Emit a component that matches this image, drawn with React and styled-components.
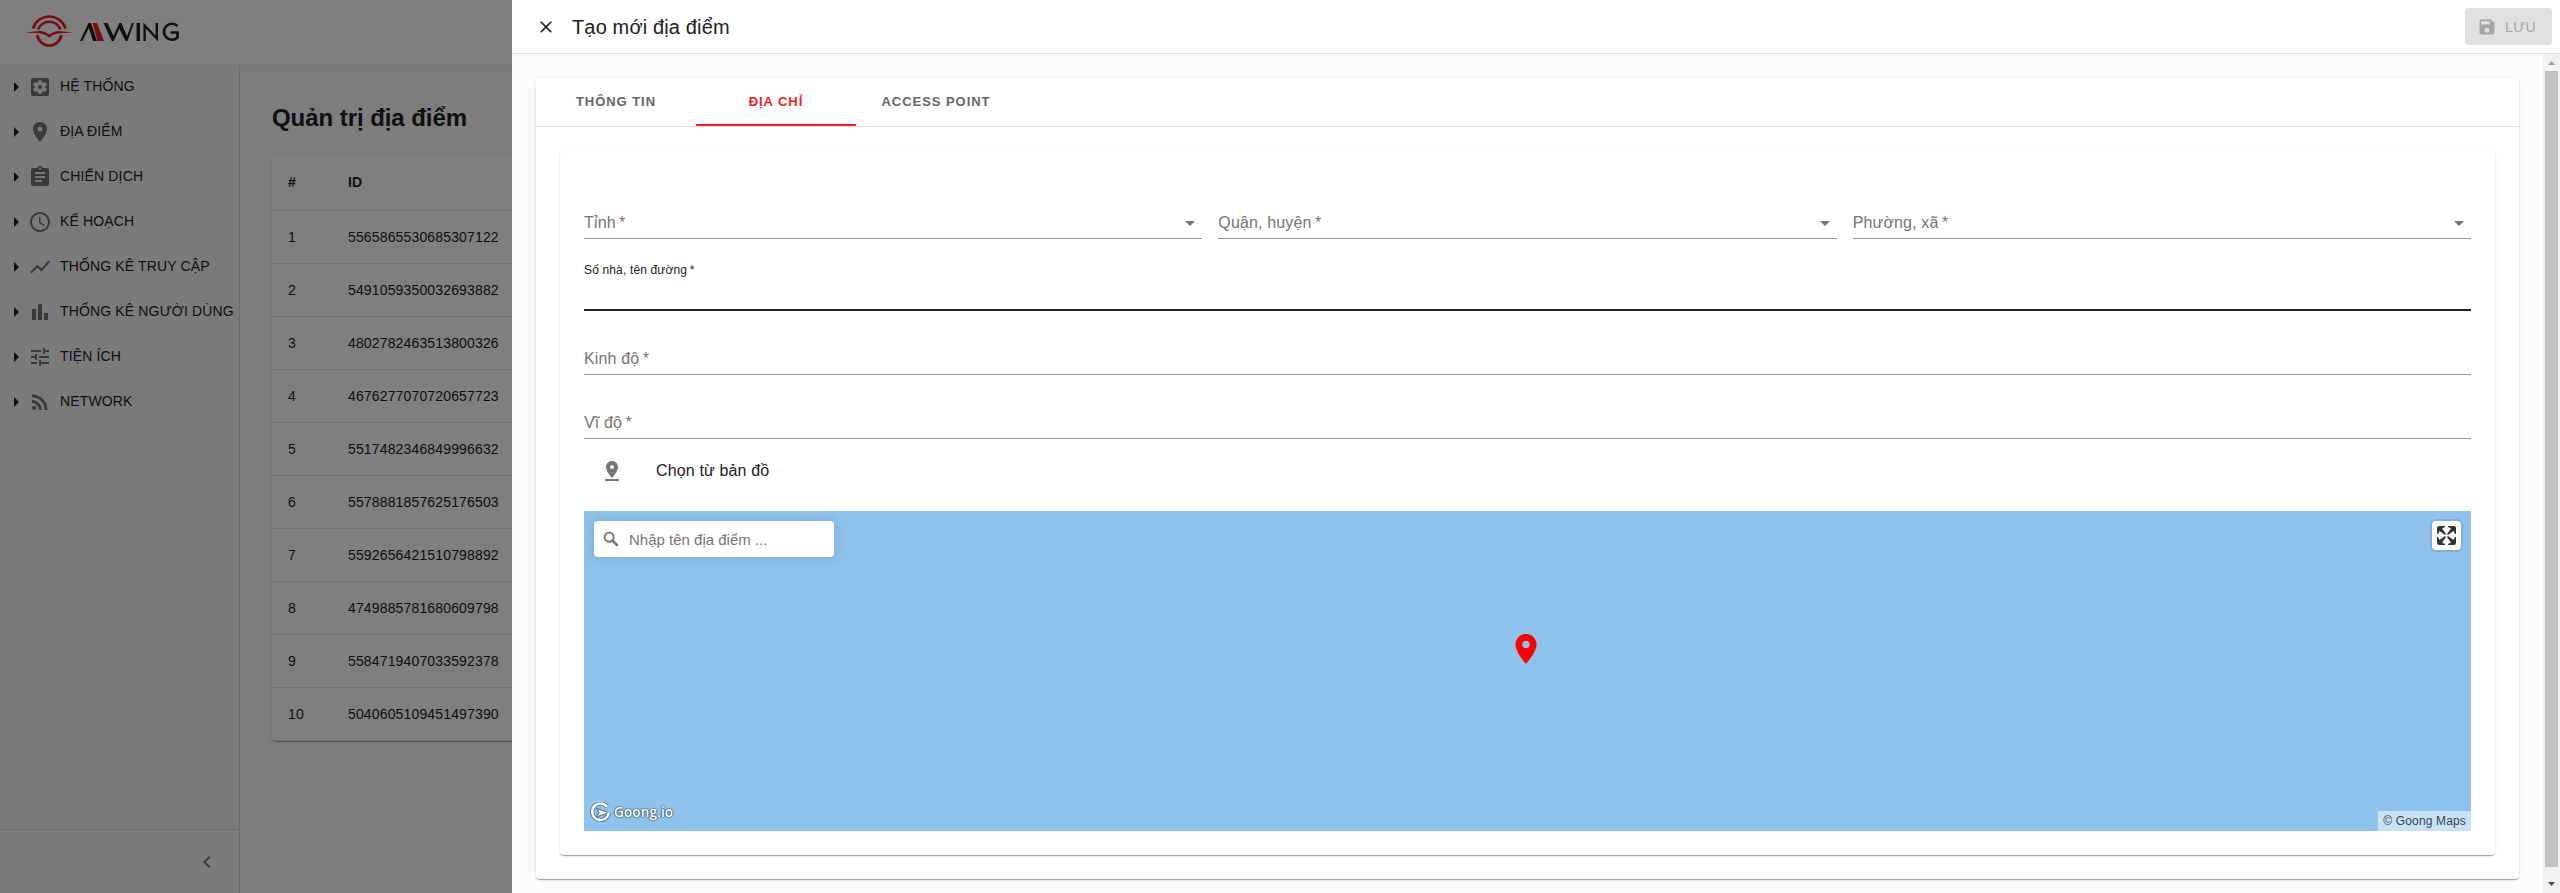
import React from "react";
import styled, { createGlobalStyle, css } from "styled-components";

const Global = createGlobalStyle`
  *, *::before, *::after { box-sizing: border-box; }
  html, body, #root { height: 100%; }
  body {
    margin: 0;
    overflow: hidden;
    font-family: "Liberation Sans", Arial, sans-serif;
    font-size: 14px;
    letter-spacing: 0.15px;
    color: #212121;
    background: #fafafa;
  }
`;

const Screen = styled.div`
  position: relative;
  width: 100%;
  height: 893px;
  overflow: hidden;
`;

const paper = css`
  background: #fff;
  border-radius: 4px;
  box-shadow: 0 2px 1px -1px rgba(0, 0, 0, 0.2), 0 1px 1px rgba(0, 0, 0, 0.14), 0 1px 3px rgba(0, 0, 0, 0.12);
`;

/* ---------- page behind the drawer ---------- */
const Page = styled.div`
  display: flex;
  flex-direction: column;
  height: 100%;
`;
const TopBar = styled.header`
  flex: none;
  height: 65px;
  padding: 15px 0 0 25px;
  background: #fff;
  border-bottom: 1px solid #f0f0f0;
`;
const PageBody = styled.div`
  flex: 1;
  display: flex;
  min-height: 0;
`;
const Sidebar = styled.aside`
  flex: none;
  width: 240px;
  display: flex;
  flex-direction: column;
  background: #f5f5f5;
  border-right: 1px solid #d6d6d6;
`;
const NavList = styled.nav`
  flex: 1;
`;
const NavItem = styled.div`
  display: flex;
  align-items: flex-start;
  height: 45px;
  padding: 10px 0 0 4px;
  white-space: nowrap;
  svg { display: block; }
`;
const NavIcon = styled.span`
  color: #757575;
`;
const NavLabel = styled.span`
  margin: 1px 0 0 8px;
  line-height: 20px;
`;
const SidebarFoot = styled.div`
  flex: none;
  height: 64px;
  display: flex;
  align-items: center;
  justify-content: flex-end;
  padding: 0 20px 0 0;
  border-top: 1px solid #dcdcdc;
  background: #f8f8f8;
  color: #757575;
`;
const Main = styled.main`
  flex: 1;
  padding: 37px 24px 0 32px;
`;
const PageTitle = styled.h1`
  margin: 0 0 20px;
  font-size: 24px;
  line-height: 32px;
  font-weight: 700;
  letter-spacing: -0.06px;
`;
const Table = styled.div`
  ${paper}
`;
const Row = styled.div`
  display: flex;
  align-items: center;
  height: ${(p) => (p.$head ? 57 : 53)}px;
  padding-left: 16px;
  border-bottom: 1px solid #e0e0e0;
  font-weight: ${(p) => (p.$head ? 700 : 400)};
`;
const IndexCell = styled.span`
  width: 60px;
`;

/* ---------- drawer ---------- */
const Backdrop = styled.div`
  position: absolute;
  inset: 0;
  background: rgba(0, 0, 0, 0.5);
`;
const Drawer = styled.section`
  position: absolute;
  top: 0;
  right: 0;
  width: 2048px;
  height: 100%;
  display: flex;
  flex-direction: column;
  background: #fafafa;
`;
const DrawerHead = styled.div`
  flex: none;
  display: flex;
  align-items: center;
  height: 54px;
  padding: 0 8px 0 24px;
  background: #fff;
  border-bottom: 1px solid #e0e0e0;
`;
const DrawerTitle = styled.h2`
  flex: 1;
  margin: 0 0 0 16px;
  font-size: 20px;
  line-height: 32px;
  font-weight: 400;
`;
const SaveButton = styled.button`
  display: flex;
  align-items: center;
  width: 87px;
  height: 37px;
  padding: 0 0 0 12px;
  border: 0;
  border-radius: 4px;
  background: #e0e0e0;
  color: #a6a6a6;
  font: inherit;
  letter-spacing: 0.4px;
  svg { margin-right: 8px; }
`;
const DrawerBody = styled.div`
  flex: 1;
  display: flex;
  min-height: 0;
`;
const Scroll = styled.div`
  flex: 1;
  padding: 24px;
`;
const TabCard = styled.div`
  ${paper}
  height: 801px;
`;
const Tabs = styled.div`
  display: flex;
  height: 49px;
  border-bottom: 1px solid #e0e0e0;
`;
const Tab = styled.div`
  width: 160px;
  height: 48px;
  padding-bottom: ${(p) => (p.$active ? 0 : 2)}px;
  display: flex;
  align-items: center;
  justify-content: center;
  font-size: 13px;
  font-weight: 700;
  letter-spacing: 0.95px;
  color: ${(p) => (p.$active ? "#ed1c24" : "#666")};
  border-bottom: ${(p) => (p.$active ? "2px solid #ed1c24" : "0")};
`;
const FormCard = styled.div`
  ${paper}
  margin: 24px;
  height: 704px;
  padding: 40px 24px 24px;
  display: flex;
  flex-direction: column;
`;
const SelectRow = styled.div`
  display: grid;
  grid-template-columns: repeat(3, 1fr);
  gap: 16px;
  margin-bottom: 24px;
`;
const FieldStack = styled.div`
  display: flex;
  flex-direction: column;
  gap: 16px;
`;
const Field = styled.div`
  flex: none;
  display: flex;
  align-items: flex-end;
  justify-content: space-between;
  height: 48px;
  padding-bottom: 5px;
  border-bottom: 1px solid #949494;
  font-size: 16px;
  line-height: 20px;
  color: #757575;
  svg { display: block; margin-bottom: -2px; }
  ${(p) =>
    p.$focused &&
    css`
      align-items: flex-start;
      padding: 0;
      border-bottom: 2px solid #212121;
      font-size: 12px;
      line-height: 14px;
      color: #212121;
    `}
`;
const PickRow = styled.div`
  flex: none;
  display: flex;
  align-items: center;
  gap: 32px;
  height: 48px;
  margin: 8px 0 16px;
  padding-left: 16px;
  font-size: 16px;
  svg { color: #757575; }
`;
const Map = styled.div`
  position: relative;
  flex: none;
  height: 320px;
  background: #8fc3eb;
`;
const SearchBox = styled.div`
  position: absolute;
  top: 10px;
  left: 10px;
  display: flex;
  align-items: center;
  gap: 8px;
  width: 240px;
  height: 36px;
  padding-left: 7px;
  border-radius: 4px;
  background: #fff;
  box-shadow: 0 0 10px 2px rgba(0, 0, 0, 0.1);
  font-size: 15px;
  letter-spacing: 0;
  color: #757575;
`;
const FullscreenButton = styled.div`
  position: absolute;
  top: 10px;
  right: 10px;
  width: 29px;
  height: 29px;
  border-radius: 4px;
  background: #fff;
  box-shadow: 0 0 0 2px rgba(0, 0, 0, 0.1);
`;
const Marker = styled.div`
  position: absolute;
  top: 120px;
  left: calc(50% - 20px);
  color: #f00;
  svg { display: block; }
`;
const Attribution = styled.div`
  position: absolute;
  right: 0;
  bottom: 0;
  padding: 0 5px;
  font-size: 12px;
  line-height: 20px;
  color: rgba(0, 0, 0, 0.75);
  background: rgba(255, 255, 255, 0.5);
`;
const MapLogo = styled.div`
  position: absolute;
  left: 6px;
  bottom: 8px;
  display: flex;
  align-items: center;
  gap: 3px;
  color: #fff;
  font-family: "Open Sans", "Liberation Sans", sans-serif;
  font-size: 13.5px;
  line-height: 21px;
  font-weight: 600;
  letter-spacing: 0.15px;
  text-shadow: 0 0 1px #345, 0 0 2px #345, 0 0 1px #345;
`;
const ScrollBar = styled.div`
  flex: none;
  width: 17px;
  display: flex;
  flex-direction: column;
  align-items: center;
  background: #f1f1f1;
  svg { flex: none; display: block; }
`;
const Thumb = styled.div`
  width: 13px;
  height: 796px;
  margin-bottom: 9px;
  background: #c1c1c1;
`;

const Icon = ({ d, size = 24 }) => (
  <svg width={size} height={size} viewBox="0 0 24 24" fill="currentColor">
    <path d={d} />
  </svg>
);

const icons = {
  right: "M10 17l5-5-5-5v10z",
  down: "M7 10l5 5 5-5z",
  settings:
    "M12 10c-1.1 0-2 .9-2 2s.9 2 2 2 2-.9 2-2-.9-2-2-2zm7-7H5c-1.11 0-2 .9-2 2v14c0 1.1.89 2 2 2h14c1.11 0 2-.9 2-2V5c0-1.1-.89-2-2-2zm-1.75 9c0 .23-.02.46-.05.68l1.48 1.16c.13.11.17.3.08.45l-1.4 2.42c-.09.15-.27.21-.43.15l-1.74-.7c-.36.28-.76.51-1.18.69l-.26 1.85c-.03.17-.18.3-.35.3h-2.8c-.17 0-.32-.13-.35-.29l-.26-1.85c-.43-.18-.82-.41-1.18-.69l-1.74.7c-.16.06-.34 0-.43-.15l-1.4-2.42c-.09-.15-.05-.34.08-.45l1.48-1.16c-.03-.23-.05-.46-.05-.69 0-.23.02-.46.05-.68l-1.48-1.16c-.13-.11-.17-.3-.08-.45l1.4-2.42c.09-.15.27-.21.43-.15l1.74.7c.36-.28.76-.51 1.18-.69l.26-1.85c.03-.17.18-.3.35-.3h2.8c.17 0 .32.13.35.29l.26 1.85c.43.18.82.41 1.18.69l1.74-.7c.16-.06.34 0 .43.15l1.4 2.42c.09.15.05.34-.08.45l-1.48 1.16c.03.23.05.46.05.69z",
  place:
    "M12 2C8.13 2 5 5.13 5 9c0 5.25 7 13 7 13s7-7.75 7-13c0-3.87-3.13-7-7-7zm0 9.5c-1.38 0-2.5-1.12-2.5-2.5s1.12-2.5 2.5-2.5 2.5 1.12 2.5 2.5-1.12 2.5-2.5 2.5z",
  assignment:
    "M19 3h-4.18C14.4 1.84 13.3 1 12 1c-1.3 0-2.4.84-2.82 2H5c-1.1 0-2 .9-2 2v14c0 1.1.9 2 2 2h14c1.1 0 2-.9 2-2V5c0-1.1-.9-2-2-2zm-7 0c.55 0 1 .45 1 1s-.45 1-1 1-1-.45-1-1 .45-1 1-1zm2 14H7v-2h7v2zm3-4H7v-2h10v2zm0-4H7V7h10v2z",
  clock:
    "M11.99 2C6.47 2 2 6.48 2 12s4.47 10 9.99 10C17.52 22 22 17.52 22 12S17.52 2 11.99 2zM12 20c-4.42 0-8-3.58-8-8s3.58-8 8-8 8 3.58 8 8-3.58 8-8 8zm.5-13H11v6l5.25 3.15.75-1.23-4.5-2.67z",
  line: "M3.5 18.49l6-6.01 4 4L22 6.92l-1.41-1.41-7.09 7.97-4-4L2 16.99z",
  bars: "M4 9h4v11H4zm12 4h4v7h-4zm-6-9h4v16h-4z",
  tune: "M3 17v2h6v-2H3zM3 5v2h10V5H3zm10 16v-2h8v-2h-8v-2h-2v6h2zM7 9v2H3v2h4v2h2V9H7zm14 4v-2H11v2h10zm-6-4h2V7h4V5h-4V3h-2v6z",
  rss: "M6.18 15.64a2.18 2.18 0 1 1 0 4.36 2.18 2.18 0 0 1 0-4.36zM4 4.44A15.56 15.56 0 0 1 19.56 20h-2.83A12.73 12.73 0 0 0 4 7.27zm0 5.66a9.9 9.9 0 0 1 9.9 9.9h-2.83A7.07 7.07 0 0 0 4 12.93z",
  left: "M15.41 7.41L14 6l-6 6 6 6 1.41-1.41L10.83 12z",
  close:
    "M19 6.41L17.59 5 12 10.59 6.41 5 5 6.41 10.59 12 5 17.59 6.41 19 12 13.41 17.59 19 19 17.59 13.41 12z",
  save: "M17 3H5c-1.11 0-2 .9-2 2v14c0 1.1.89 2 2 2h14c1.1 0 2-.9 2-2V7l-4-4zm-5 16c-1.66 0-3-1.34-3-3s1.34-3 3-3 3 1.34 3 3-1.34 3-3 3zm3-10H5V5h10v4z",
  pinDrop:
    "M18 8c0-3.31-2.69-6-6-6S6 4.69 6 8c0 4.5 6 11 6 11s6-6.5 6-11zm-8 0c0-1.1.9-2 2-2s2 .9 2 2-.89 2-2 2c-1.1 0-2-.9-2-2zM5 20v2h14v-2H5z",
};

const nav = [
  ["settings", "HỆ THỐNG"],
  ["place", "ĐỊA ĐIỂM"],
  ["assignment", "CHIẾN DỊCH"],
  ["clock", "KẾ HOẠCH"],
  ["line", "THỐNG KÊ TRUY CẬP"],
  ["bars", "THỐNG KÊ NGƯỜI DÙNG"],
  ["tune", "TIỆN ÍCH"],
  ["rss", "NETWORK"],
];

const ids = [
  "5565865530685307122",
  "5491059350032693882",
  "4802782463513800326",
  "4676277070720657723",
  "5517482346849996632",
  "5578881857625176503",
  "5592656421510798892",
  "4749885781680609798",
  "5584719407033592378",
  "5040605109451497390",
];

const Logo = () => (
  <svg width="156" height="34" viewBox="0 0 156 34">
    <g fill="none" stroke="#ed1c24">
      <path d="M8 13.5A17 17 0 0 1 40.5 13.5" strokeWidth="2.6" />
      <path d="M13.2 14.5A11.8 11.8 0 0 1 35.4 14.5" strokeWidth="2.6" />
      <path d="M12.3 20A12.1 12.1 0 0 0 36.300 20" strokeWidth="2.8" />
    </g>
    <path d="M0 17.5L15 16Q21 16.5 24.3 19.5Q27.6 16.5 33.6 16L48 17.5L35 18.3Q28 19 24.3 22.8Q20.6 19 13.6 18.3Z" fill="#ed1c24" />
    <path d="M67.5 8L72 8L79 26L72.5 26Z" fill="#ed1c24" />
    <path d="M55 26L63.500 8H66L72 26H68L63.800 13L57.300 26Z" fill="#212121" />
    <path d="M78.500 8H82.500L88.500 21L94.300 8H96.300L102 21L107 8H109L102.500 26H100.500L94.300 13.500L88.800 26H86.800Z" fill="#212121" />
    <g fill="none" stroke="#212121">
      <path d="M113.3 8V26" strokeWidth="3.500" />
      <path d="M119.600 26V10.500L131.800 23.500V8" strokeWidth="2.400" />
      <path d="M152.500 11A8 8 0 1 0 152.500 22.500V17.500H145.500" strokeWidth="2.700" />
    </g>
  </svg>
);

const THIN_SPACE = "\u2009";

const Required = ({ children }) => (
  <span>
    {children}
    {THIN_SPACE}*
  </span>
);

export default function App() {
  return (
    <Screen>
      <Global />
      <Page>
        <TopBar>
          <Logo />
        </TopBar>
        <PageBody>
          <Sidebar>
            <NavList>
              {nav.map(([icon, label]) => (
                <NavItem key={label}>
                  <Icon d={icons.right} />
                  <NavIcon>
                    <Icon d={icons[icon]} />
                  </NavIcon>
                  <NavLabel>{label}</NavLabel>
                </NavItem>
              ))}
            </NavList>
            <SidebarFoot>
              <Icon d={icons.left} />
            </SidebarFoot>
          </Sidebar>
          <Main>
            <PageTitle>Quản trị địa điểm</PageTitle>
            <Table>
              <Row $head>
                <IndexCell>#</IndexCell>
                <span>ID</span>
              </Row>
              {ids.map((id, i) => (
                <Row key={id}>
                  <IndexCell>{i + 1}</IndexCell>
                  <span>{id}</span>
                </Row>
              ))}
            </Table>
          </Main>
        </PageBody>
      </Page>
      <Backdrop />
      <Drawer>
        <DrawerHead>
          <Icon d={icons.close} size={20} />
          <DrawerTitle>Tạo mới địa điểm</DrawerTitle>
          <SaveButton disabled>
            <Icon d={icons.save} size={20} />
            LƯU
          </SaveButton>
        </DrawerHead>
        <DrawerBody>
          <Scroll>
            <TabCard>
              <Tabs>
                <Tab>THÔNG TIN</Tab>
                <Tab $active>ĐỊA CHỈ</Tab>
                <Tab>ACCESS POINT</Tab>
              </Tabs>
              <FormCard>
                <SelectRow>
                  {["Tỉnh", "Quận, huyện", "Phường, xã"].map((name) => (
                    <Field key={name}>
                      <Required>{name}</Required>
                      <Icon d={icons.down} />
                    </Field>
                  ))}
                </SelectRow>
                <FieldStack>
                  <Field $focused>
                    <Required>Số nhà, tên đường</Required>
                  </Field>
                  <Field>
                    <Required>Kinh độ</Required>
                  </Field>
                  <Field>
                    <Required>Vĩ độ</Required>
                  </Field>
                </FieldStack>
                <PickRow>
                  <Icon d={icons.pinDrop} />
                  <span>Chọn từ bản đồ</span>
                </PickRow>
                <Map>
                  <SearchBox>
                    <svg width="20" height="20" viewBox="0 0 18 18" fill="#757575">
                      <path d="M7.4 2.5c-2.7 0-4.9 2.2-4.9 4.9s2.2 4.9 4.9 4.9c1 0 1.8-.2 2.5-.8l3.7 3.7c.2.2.4.3.8.3.7 0 1.1-.4 1.1-1.1 0-.3-.1-.5-.3-.8L11.4 10c.4-.8.8-1.6.8-2.5.1-2.8-2.1-5-4.8-5zm0 1.6c1.8 0 3.2 1.4 3.2 3.2s-1.4 3.2-3.2 3.2-3.3-1.3-3.3-3.1 1.4-3.3 3.3-3.3z" />
                    </svg>
                    <span>Nhập tên địa điểm ...</span>
                  </SearchBox>
                  <FullscreenButton>
                    <svg width="29" height="29" viewBox="0 0 29 29" fill="#333">
                      <path d="M24 16v5.5c0 1.75-.75 2.5-2.5 2.5H16v-1l3-1.5-4-5.5 1-1 5.5 4 1.5-3h1zM6 16l1.5 3 5.5-4 1 1-4 5.5 3 1.5v1H7.5C5.75 24 5 23.25 5 21.5V16h1zm7-11v1l-3 1.5 4 5.5-1 1-5.5-4L6 13H5V7.5C5 5.75 5.75 5 7.5 5H13zm11 2.5c0-1.75-.75-2.5-2.5-2.5H16v1l3 1.5-4 5.5 1 1 5.5-4 1.5 3h1V7.5z" />
                    </svg>
                  </FullscreenButton>
                  <Marker>
                    <Icon d={icons.place} size={36} />
                  </Marker>
                  <MapLogo>
                    <svg width="21" height="21" viewBox="0 0 21 21">
                      <path d="M17 4.5A8.3 8.3 0 1 0 18.800 10.500" fill="none" stroke="#456985" strokeWidth="4" />
                      <path d="M6.500 6.500L19.500 10.800L6.500 14.800L9 10.700Z" fill="#fff" stroke="#456985" strokeWidth="1" />
                      <path d="M17 4.5A8.3 8.3 0 1 0 18.800 10.500" fill="none" stroke="#fff" strokeWidth="2.500" />
                    </svg>
                    <span>Goong.io</span>
                  </MapLogo>
                  <Attribution>© Goong Maps</Attribution>
                </Map>
              </FormCard>
            </TabCard>
          </Scroll>
          <ScrollBar>
            <svg width="17" height="17" viewBox="0 0 17 17">
              <path d="M5 11L8.500 7L12 11Z" fill="#a3a3a3" />
            </svg>
            <Thumb />
            <svg width="17" height="17" viewBox="0 0 17 17">
              <path d="M5 6L8.500 10L12 6Z" fill="#505050" />
            </svg>
          </ScrollBar>
        </DrawerBody>
      </Drawer>
    </Screen>
  );
}
